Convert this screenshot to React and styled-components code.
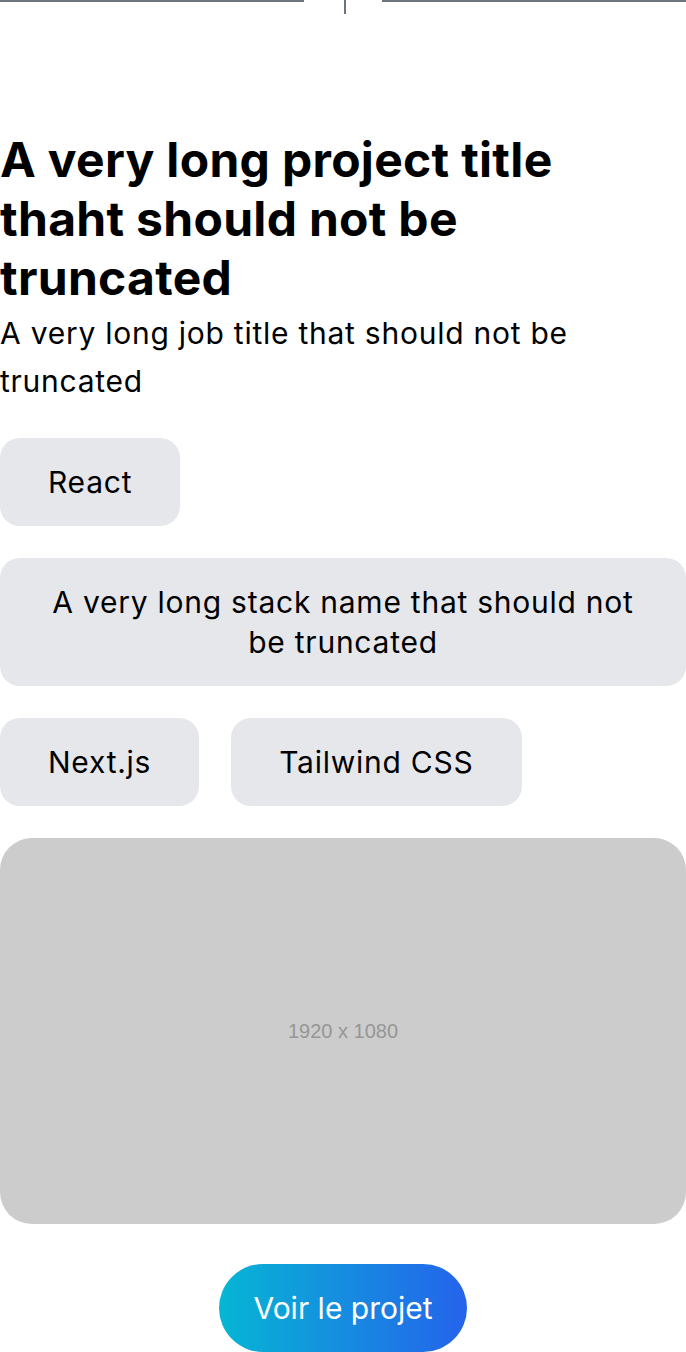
import styled, { createGlobalStyle } from "styled-components";

const GlobalStyle = createGlobalStyle`
  html, body {
    margin: 0;
    padding: 0;
    background: #fff;
  }
  body {
    font-family: Inter, "Noto Sans", sans-serif;
    color: #000;
  }
`;

const stacks = ["React", "A very long stack name that should not be truncated", "Next.js", "Tailwind CSS"];

const App = () => {
  return (
    <>
      <GlobalStyle />
      <Wrapper>
        <Connector>
          <Line />
          <TickSlot>
            <Tick />
          </TickSlot>
          <Line />
        </Connector>
        <Title>A very long project title thaht should not be truncated</Title>
        <JobTitle>A very long job title that should not be truncated</JobTitle>
        <Stacks>
          {stacks.map((stack) => (
            <Stack key={stack}>{stack}</Stack>
          ))}
        </Stacks>
        <Preview>1920 x 1080</Preview>
        <ButtonRow>
          <ProjectButton href="#">Voir le projet</ProjectButton>
        </ButtonRow>
      </Wrapper>
    </>
  );
};

const Wrapper = styled.div`
  width: 686px;
  display: flex;
  flex-direction: column;
`;

const Connector = styled.div`
  display: flex;
  align-items: flex-start;
  height: 14px;
`;

const Line = styled.div`
  flex: 1;
  height: 2px;
  background-color: #6b7280;
`;

const TickSlot = styled.div`
  width: 78px;
  display: flex;
  justify-content: center;
`;

const Tick = styled.div`
  width: 2px;
  height: 14px;
  margin-left: 3px;
  background-color: #6b7280;
`;

const Title = styled.h1`
  margin: 116px 0 0;
  font-size: 48px;
  font-weight: 700;
  line-height: 59px;
  letter-spacing: 0.3px;
  padding-right: 120px;
`;

const JobTitle = styled.p`
  margin: 2px 0 0;
  font-size: 30px;
  line-height: 48px;
  letter-spacing: 0.75px;
  padding-right: 100px;
`;

const Stacks = styled.div`
  display: flex;
  flex-wrap: wrap;
  gap: 32px;
  margin-top: 33px;
`;

const Stack = styled.div`
  padding: 24px 48px;
  background-color: #e5e7eb;
  border-radius: 20px;
  font-size: 30px;
  line-height: 40px;
  letter-spacing: 0.75px;
  text-align: center;
`;

const Preview = styled.div`
  margin-top: 32px;
  height: 386px;
  border-radius: 32px;
  background-color: #cccccc;
  color: #969696;
  font-family: "Liberation Sans", Arial, sans-serif;
  font-size: 20px;
  display: flex;
  align-items: center;
  justify-content: center;
`;

const ButtonRow = styled.div`
  display: flex;
  justify-content: center;
  margin-top: 40px;
`;

const ProjectButton = styled.a`
  display: inline-flex;
  align-items: center;
  padding: 24px 34px;
  border-radius: 9999px;
  background: linear-gradient(to right, #06b6d4, #2563eb);
  color: #fff;
  font-size: 30px;
  line-height: 40px;
  text-decoration: none;
`;

export default App;
